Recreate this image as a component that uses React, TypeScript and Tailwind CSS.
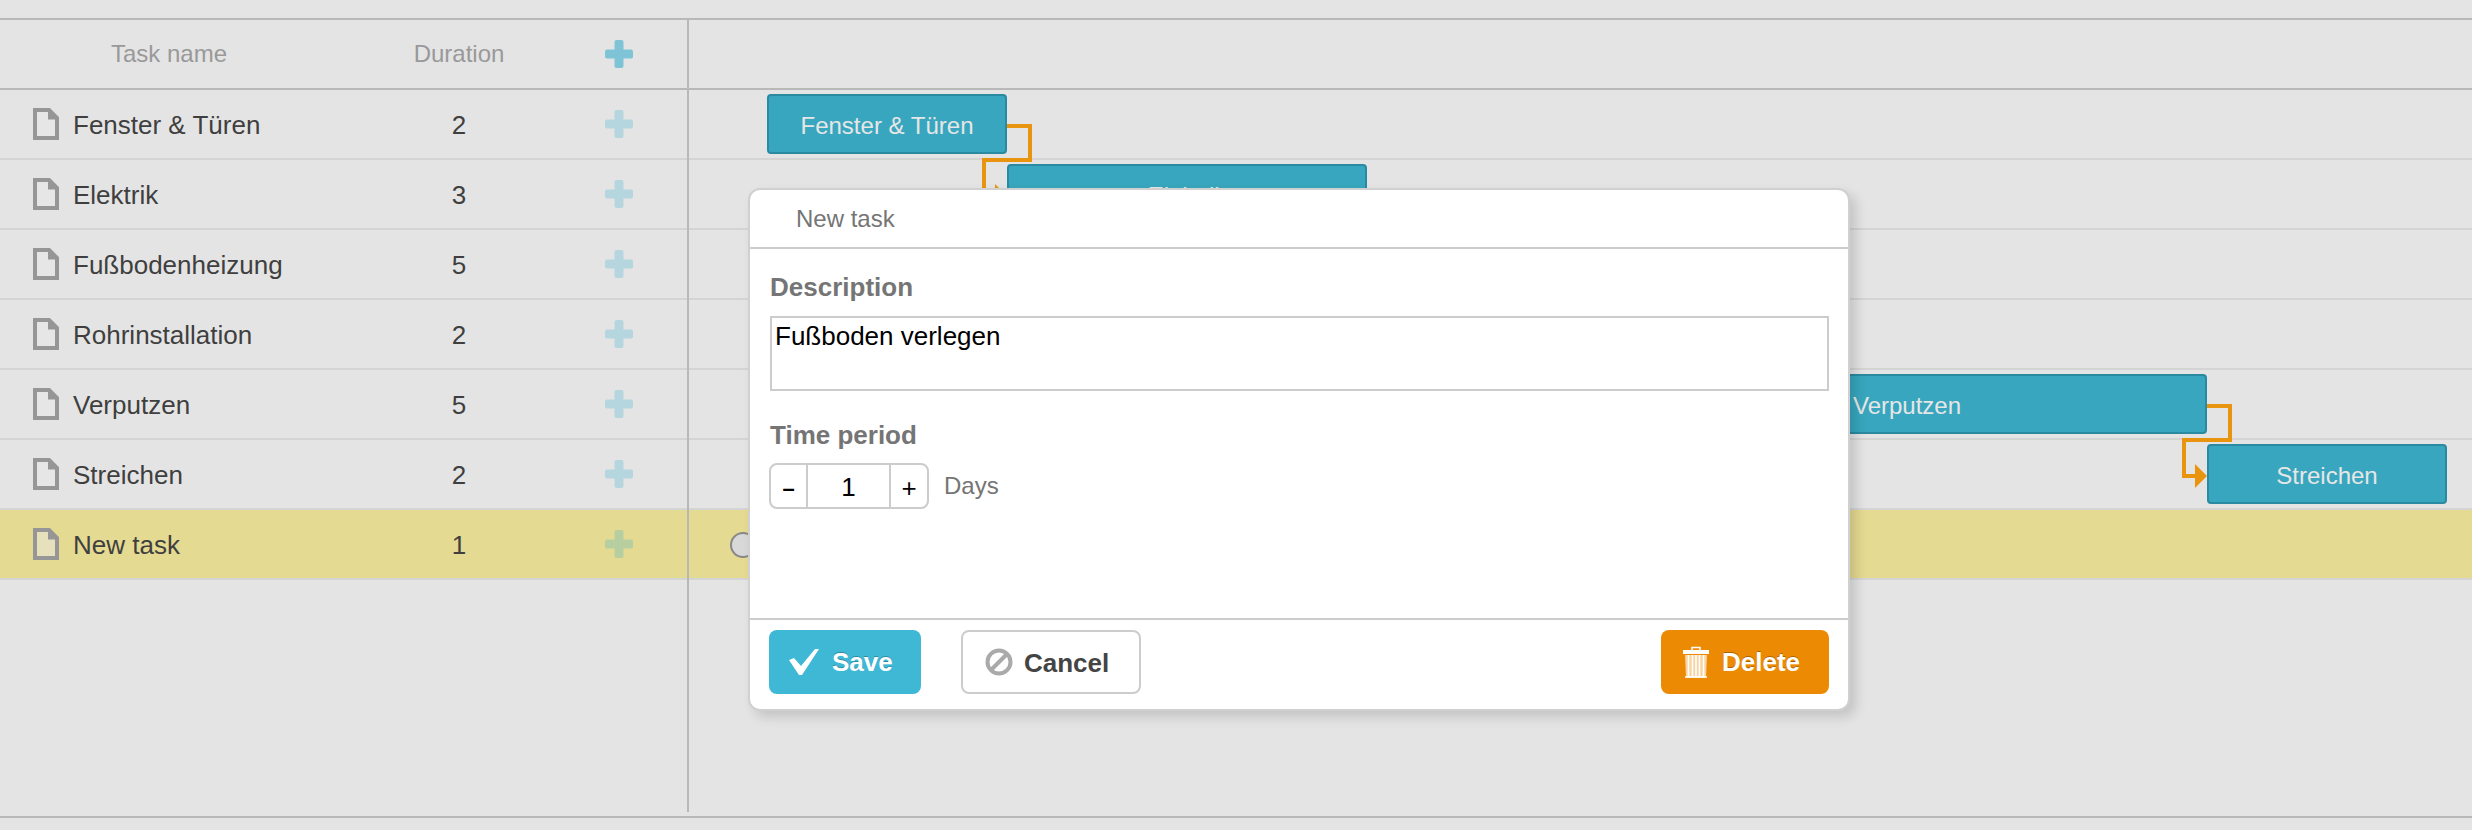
const tasks = [
  { name: "Fenster & Türen", duration: 2 },
  { name: "Elektrik", duration: 3 },
  { name: "Fußbodenheizung", duration: 5 },
  { name: "Rohrinstallation", duration: 2 },
  { name: "Verputzen", duration: 5 },
  { name: "Streichen", duration: 2 },
  { name: "New task", duration: 1, active: true },
];

function PlusIcon({ color }: { color: string }) {
  return (
    <svg width="28" height="28" viewBox="0 0 28 28" className="block">
      <rect x="9.5" y="0" width="9" height="28" rx="2" fill={color} />
      <rect x="0" y="9.5" width="28" height="9" rx="2" fill={color} />
    </svg>
  );
}

function DocIcon() {
  return (
    <svg width="26" height="32" viewBox="0 0 26 32" className="block shrink-0 blur-[0.5px]">
      <path d="M2 2H16L24 10V30H2Z" fill="#e8e8e8" fillOpacity="0.5" stroke="#969696" strokeWidth="4" />
      <path d="M15 0.5H17L25.5 9V11.5H15Z" fill="#969696" />
    </svg>
  );
}

function GanttBar({ className, label }: { className: string; label: string }) {
  return (
    <div
      className={`absolute flex h-[60px] items-center justify-center rounded-[4px] border-2 border-[#2a8aa2] bg-[#38a6be] pt-[3px] text-[24px] text-[#e6e6e6] ${className}`}
    >
      {label}
    </div>
  );
}

function Connectors() {
  return (
    <svg
      width="1783"
      height="792"
      viewBox="689 20 1783 792"
      className="absolute left-0 top-0"
      fill="none"
    >
      <path d="M1007 126H1030V160H984V196H998" stroke="#e8940f" strokeWidth="4" />
      <path d="M995 184L1007 196L995 208Z" fill="#e8940f" />
      <path d="M2207 406H2230V440H2184V476H2198" stroke="#e8940f" strokeWidth="4" />
      <path d="M2195 464L2207 476L2195 488Z" fill="#e8940f" />
    </svg>
  );
}

function TaskDialog() {
  return (
    <div className="absolute left-[748px] top-[188px] flex h-[523px] w-[1102px] flex-col rounded-[12px] border-2 border-[#d0d0d0] bg-white shadow-[6px_6px_12px_rgba(0,0,0,0.14)]">
      <div className="flex h-[59px] shrink-0 items-center border-b-2 border-[#cccccc] pl-[46px] text-[24px] text-[#757575]">
        New task
      </div>
      <div className="flex-1 pl-5 pr-[19px] pt-[23px]">
        <div className="text-[26px] font-bold leading-[30px] text-[#757575]">Description</div>
        <textarea
          readOnly
          value="Fußboden verlegen"
          className="mt-[14px] block h-[75px] w-full resize-none rounded-none border-2 border-[#cccccc] pl-[3px] pr-1 pt-[3px] text-[26px] leading-[30px] text-black outline-none"
        />
        <div className="mt-[29px] text-[26px] font-bold leading-[30px] text-[#757575]">Time period</div>
        <div className="mt-[13px] flex items-start">
          <div className="-ml-px flex h-[46px] w-[160px] items-center rounded-[8px] border-2 border-[#cccccc] text-black">
            <span className="flex h-full w-[37px] items-center justify-center border-r-2 border-[#cccccc] pt-[4px] text-[22px] font-bold">
              –
            </span>
            <span className="flex h-full flex-1 items-center justify-center pt-[2px] text-[26px]">1</span>
            <span className="flex h-full w-[38px] items-center justify-center border-l-2 border-[#cccccc] pt-[4px] text-[26px]">
              +
            </span>
          </div>
          <span className="ml-[15px] pt-[1px] text-[24px] leading-[44px] text-[#757575]">Days</span>
        </div>
      </div>
      <div className="flex h-[91px] shrink-0 items-start justify-between border-t-2 border-[#cccccc] pl-[19px] pr-[19px] pt-[10px]">
        <div className="flex gap-[40px]">
          <button className="flex h-[64px] w-[152px] items-center rounded-[8px] bg-[#3eb8d5] pl-[20px] text-[26px] font-bold text-white [text-shadow:0_-1px_0_rgba(0,0,0,0.25)]">
            <svg width="30" height="26" viewBox="0 0 30 26" className="mr-[13px] blur-[0.5px]">
              <path d="M0 11L5 9L12 17L26 0H30L13 26H10Z" fill="#ffffff" />
            </svg>
            Save
          </button>
          <button className="flex h-[64px] w-[180px] items-center rounded-[8px] border-2 border-[#cccccc] bg-white pl-[22px] text-[26px] font-bold text-[#444444]">
            <svg width="28" height="28" viewBox="0 0 28 28" className="mr-[11px] blur-[0.5px]" fill="none">
              <circle cx="14" cy="14" r="11.5" stroke="#aaaaaa" strokeWidth="4" />
              <path d="M6 22L22 6" stroke="#aaaaaa" strokeWidth="4" />
            </svg>
            <span className="pt-[2px]">Cancel</span>
          </button>
        </div>
        <button className="flex h-[64px] w-[168px] items-center rounded-[8px] bg-[#ec8b03] pl-[22px] text-[26px] font-bold text-white [text-shadow:0_-1px_0_rgba(0,0,0,0.3)]">
          <svg width="26" height="32" viewBox="0 0 26 32" className="mr-[13px]" fill="none">
            <path d="M9 4V1.5H17V4" stroke="#ffffff" strokeWidth="1.5" />
            <rect x="0" y="4" width="26" height="4" fill="#ffffff" />
            <path d="M2 9H24L23 32H3Z" fill="#f9d3a0" />
            <path
              d="M5.5 9V31M9.5 9V31M13 9V31M16.5 9V31M20.5 9V31M2 31H24"
              stroke="#ffffff"
              strokeWidth="1.6"
            />
          </svg>
          Delete
        </button>
      </div>
    </div>
  );
}

export default function App() {
  return (
    <div className="relative h-[830px] w-full overflow-hidden bg-[#e4e4e4] pt-[18px] font-['Liberation_Sans',Arial,sans-serif]">
      <div className="h-[800px] border-y-2 border-[#b8b8b8]">
        <div className="flex h-[792px]">
          <div className="w-[689px] shrink-0 border-r-2 border-[#b8b8b8]">
            <div className="grid h-[70px] grid-cols-[338px_242px_78px] items-center border-b-2 border-[#b8b8b8] text-center text-[24px] text-[#999999]">
              <span>Task name</span>
              <span>Duration</span>
              <span className="flex justify-center">
                <PlusIcon color="#7fc4d6" />
              </span>
            </div>
            {tasks.map((task) => (
              <div
                key={task.name}
                className={`grid h-[70px] grid-cols-[338px_242px_78px] items-center border-b-2 border-[#d4d4d4] text-[26px] text-[#3f3f3f] ${
                  task.active ? "bg-[#e5da91]" : ""
                }`}
              >
                <span className="flex items-center gap-[14px] pl-[33px]">
                  <DocIcon />
                  <span className="pt-[2px]">{task.name}</span>
                </span>
                <span className="pt-[2px] text-center">{task.duration}</span>
                <span className="flex justify-center">
                  <PlusIcon color={task.active ? "#b7cfa0" : "#b6d6df"} />
                </span>
              </div>
            ))}
          </div>
          <div className="relative flex-1">
            <div className="h-[70px] border-b-2 border-[#b8b8b8]" />
            {tasks.map((task) => (
              <div
                key={task.name}
                className={`h-[70px] border-b-2 border-[#d4d4d4] ${task.active ? "bg-[#e5da91]" : ""}`}
              />
            ))}
            <Connectors />
            <GanttBar className="left-[78px] top-[74px] w-[240px]" label="Fenster & Türen" />
            <GanttBar className="left-[318px] top-[144px] w-[360px]" label="Elektrik" />
            <GanttBar className="left-[918px] top-[354px] w-[600px]" label="Verputzen" />
            <GanttBar className="left-[1518px] top-[424px] w-[240px]" label="Streichen" />
            <div className="absolute left-[41px] top-[512px] h-[26px] w-[26px] rounded-full border-2 border-[#888888] bg-[#d8d8d8]" />
          </div>
        </div>
      </div>
      <TaskDialog />
    </div>
  );
}
